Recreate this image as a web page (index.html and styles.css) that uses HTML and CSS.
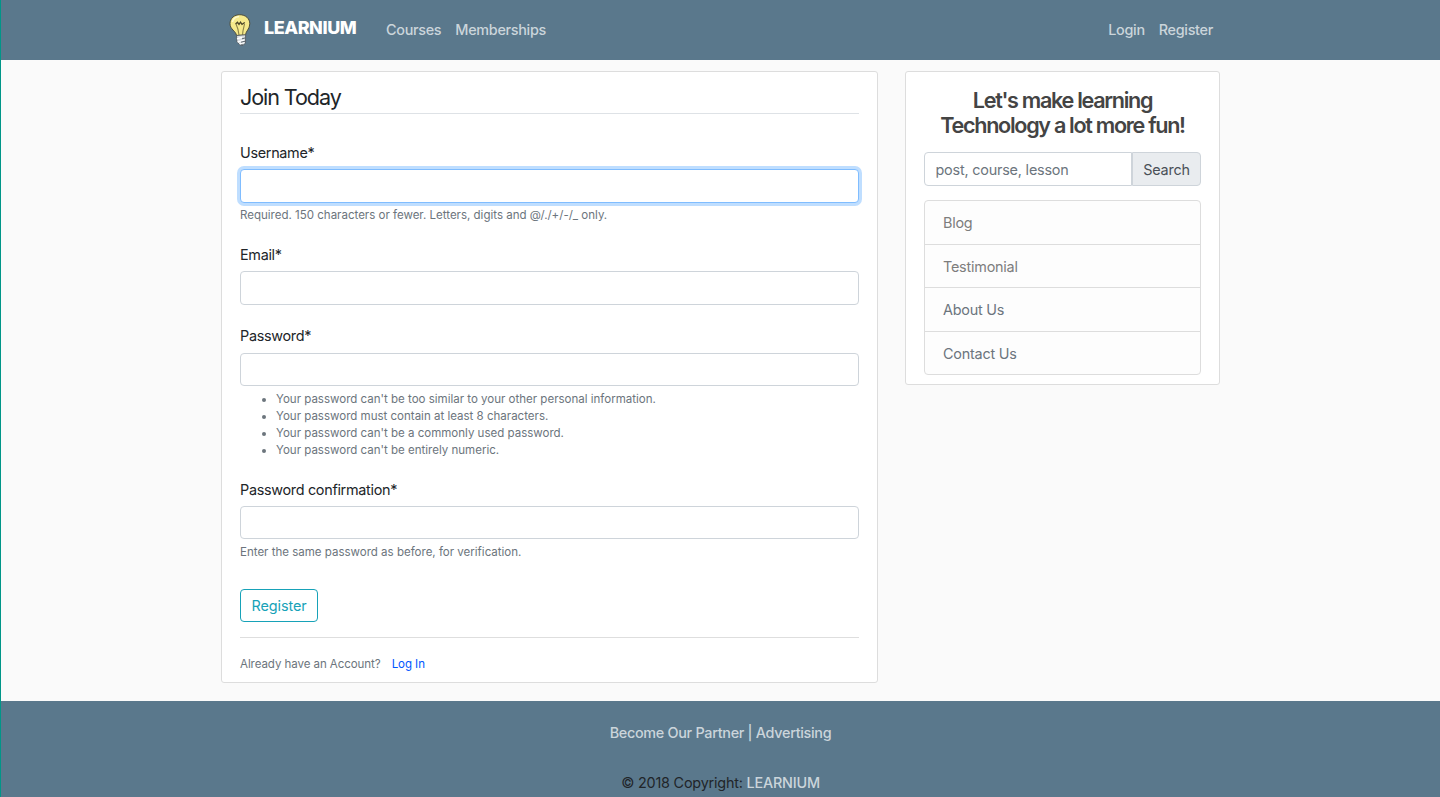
FILE: index.html
```html
<!DOCTYPE html>
<html lang="en">
<head>
<meta charset="utf-8">
<title>Learnium</title>
<link rel="stylesheet" href="styles.css">
</head>
<body>
<header class="navbar">
  <div class="nav-inner">
    <a class="brand">
      <svg class="bulb" width="22" height="32" viewBox="0 0 22 32">
        <path d="M7.500 21.500 C7 17 1 15.500 1 9.800 C1 4 5.500 .7 10.800 .7 C16.500 .7 20.800 4.500 20.800 9.800 C20.800 15 16.800 17 16.500 21 Z" fill="#f6ea8c" stroke="#4f4f3c" stroke-width="1"/>
        <path d="M3.500 8 C4 4.500 7 3 10 2.600" fill="none" stroke="#fffbd0" stroke-width="1.500"/>
        <path d="M10 21 C9.500 16 9 14 7 10 M15.500 10 C15 13 13.700 16 13.500 21" fill="none" stroke="#8b8249" stroke-width="1.100"/>
        <path d="M6.500 10 L8.500 8.300 L10 10.300 L11.500 8.200 L13 10.300 L15.800 8.500" fill="none" stroke="#4b4528" stroke-width="1.300"/>
        <path d="M7.500 21.500 L16.600 20.800 L16.500 29 L14 31.500 L11 31 L8 28 Z" fill="#d9dee2" stroke="#4b5359" stroke-width=".8"/>
        <path d="M8 24.800 L13 23.300 M8.500 28 L15 26 M10.500 30 L15 28.500" stroke="#fff" stroke-width="1.300"/>
        <path d="M13 24.800 L16.300 23.900 M12 28.200 L16.300 27.200 M12 31 L14.500 30.700" stroke="#59636b" stroke-width="1"/>
      </svg>
      <span class="brand-name">LEARNIUM</span>
    </a>
    <nav class="links"><a>Courses</a><a>Memberships</a></nav>
    <nav class="links account"><a>Login</a><a>Register</a></nav>
  </div>
</header>
<main class="page">
  <section class="card form-card">
    <h1 class="title">Join Today</h1>
    <form>
      <div class="field">
        <label>Username*</label>
        <input class="control focused" type="text">
        <small class="help">Required. 150 characters or fewer. Letters, digits and @/./+/-/_ only.</small>
      </div>
      <div class="field">
        <label>Email*</label>
        <input class="control" type="email">
      </div>
      <div class="field password">
        <label>Password*</label>
        <input class="control" type="password">
        <ul class="help rules">
          <li>Your password can't be too similar to your other personal information.</li>
          <li>Your password must contain at least 8 characters.</li>
          <li>Your password can't be a commonly used password.</li>
          <li>Your password can't be entirely numeric.</li>
        </ul>
      </div>
      <div class="field confirm">
        <label>Password confirmation*</label>
        <input class="control" type="password">
        <small class="help">Enter the same password as before, for verification.</small>
      </div>
      <button class="submit" type="button">Register</button>
    </form>
    <div class="signin"><span>Already have an Account?</span><a class="login">Log In</a></div>
  </section>
  <aside class="card side-card">
    <h2 class="tagline"><span>Let's make learning</span><br><span>Technology a lot more fun!</span></h2>
    <div class="search">
      <input class="search-input" type="text" placeholder="post, course, lesson">
      <button class="search-btn" type="button">Search</button>
    </div>
    <ul class="menu">
      <li class="warm">Blog</li>
      <li class="warm">Testimonial</li>
      <li>About Us</li>
      <li>Contact Us</li>
    </ul>
  </aside>
</main>
<footer class="footer">
  <p class="partners"><a>Become Our Partner</a> | <a>Advertising</a></p>
  <p class="copy">© 2018 Copyright: <a>LEARNIUM</a></p>
</footer>
</body>
</html>
```
FILE: styles.css
```css
* { box-sizing: border-box; }
body {
  margin: 0;
  height: 797px;
  overflow: hidden;
  display: flex;
  flex-direction: column;
  border-left: 1px solid #009688;
  background: #fafafa;
  color: #212529;
  font: 400 14.4px/22px Inter, "Liberation Sans", sans-serif;
}
h1, h2, p, ul { margin: 0; padding: 0; }
input, button { font: inherit; letter-spacing: inherit; outline: 0; }

.navbar { height: 60px; flex: none; background: #5a788c; }
.nav-inner { width: 998px; height: 60px; margin-left: 220px; display: flex; align-items: center; }
.brand { display: flex; width: 165px; padding-left: 8px; }
.bulb { margin-right: 13px; flex: none; }
.brand-name { color: #fff; font-size: 18px; font-weight: 800; line-height: 27px; letter-spacing: -.45px; }
.links { display: flex; gap: 14px; color: #cbd5db; font-weight: 500; letter-spacing: -.3px; }
.account { margin-left: auto; padding-right: 6px; }

.page { display: flex; align-items: flex-start; gap: 27px; height: 641px; flex: none; padding: 11px 0 0 220px; }
.card { background: #fff; border: 1px solid #dddddd; border-radius: 3px; }
.form-card { width: 657px; height: 612px; padding: 10px 18px 0; }
.title { height: 32px; border-bottom: 1px solid #dee2e6; font-size: 21.6px; font-weight: 400; line-height: 31px; letter-spacing: -1.1px; margin-bottom: 28px; }
.field { display: flex; flex-direction: column; margin-bottom: 20px; }
.field label { height: 22px; margin-bottom: 5px; letter-spacing: -.3px; }
.control { height: 34px; width: 100%; border: 1px solid #ced4da; border-radius: 4px; background: #fff; }
.focused { border-color: #80bdff; box-shadow: 0 0 0 3px #bfdeff; }
.help { color: #6c757d; font-size: 11.52px; line-height: 17px; margin-top: 4px; }
.password label { margin-bottom: 6px; }
.password .control, .confirm .control { height: 33px; }
.rules { padding-left: 36px; margin-top: 5px; }
.confirm { margin-bottom: 28px; }
.confirm .help { margin-top: 5px; }
.submit { display: block; width: 78px; height: 33px; padding: 0; background: #fff; color: #17a2b8; border: 1px solid #17a2b8; border-radius: 4px; letter-spacing: -.08px; }
.signin { display: flex; gap: 11px; margin-top: 15px; padding-top: 18px; border-top: 1px solid #dedede; font-size: 11.52px; line-height: 17px; letter-spacing: -.06px; color: #6c757d; }
.login { color: #0056ff; }

.side-card { width: 315px; height: 314px; padding: 16px 18px 0; }
.tagline { color: #444; font-size: 21.6px; line-height: 25px; font-weight: 600; letter-spacing: -1.3px; text-align: center; white-space: nowrap; margin-bottom: 14px; }
.search { display: flex; height: 34px; margin-bottom: 14px; }
.search-input { width: 208px; padding: 1px 10.5px 0; border: 1px solid #ced4da; border-radius: 4px 0 0 4px; color: #6c757d; letter-spacing: -.2px; }
.search-input::placeholder { color: #6c757d; opacity: 1; }
.search-btn { flex: 1; padding: 1px 0 0; border: 1px solid #ced4da; border-radius: 0 4px 4px 0; background: #e9ecef; color: #495057; letter-spacing: -.2px; }
.menu { list-style: none; border: 1px solid #dddddd; border-radius: 4px; background: #fdfdfd; color: #6c757d; height: 175px; display: grid; grid-template-rows: 44px 43px 44px 42px; letter-spacing: -.22px; }
.menu li { padding: 0 18px; line-height: 43px; border-bottom: 1px solid #dddddd; }
.menu li:last-child { border-bottom: 0; }
.menu .warm { color: #7d7d7d; }

.footer { flex: 1; background: #5a788c; text-align: center; color: #212529; letter-spacing: -.2px; }
.partners { padding-top: 21px; color: #cbd5db; font-weight: 500; letter-spacing: -.3px; }
.copy { padding-top: 28px; }
.copy a { color: #cbd5db; font-weight: 500; }
```
